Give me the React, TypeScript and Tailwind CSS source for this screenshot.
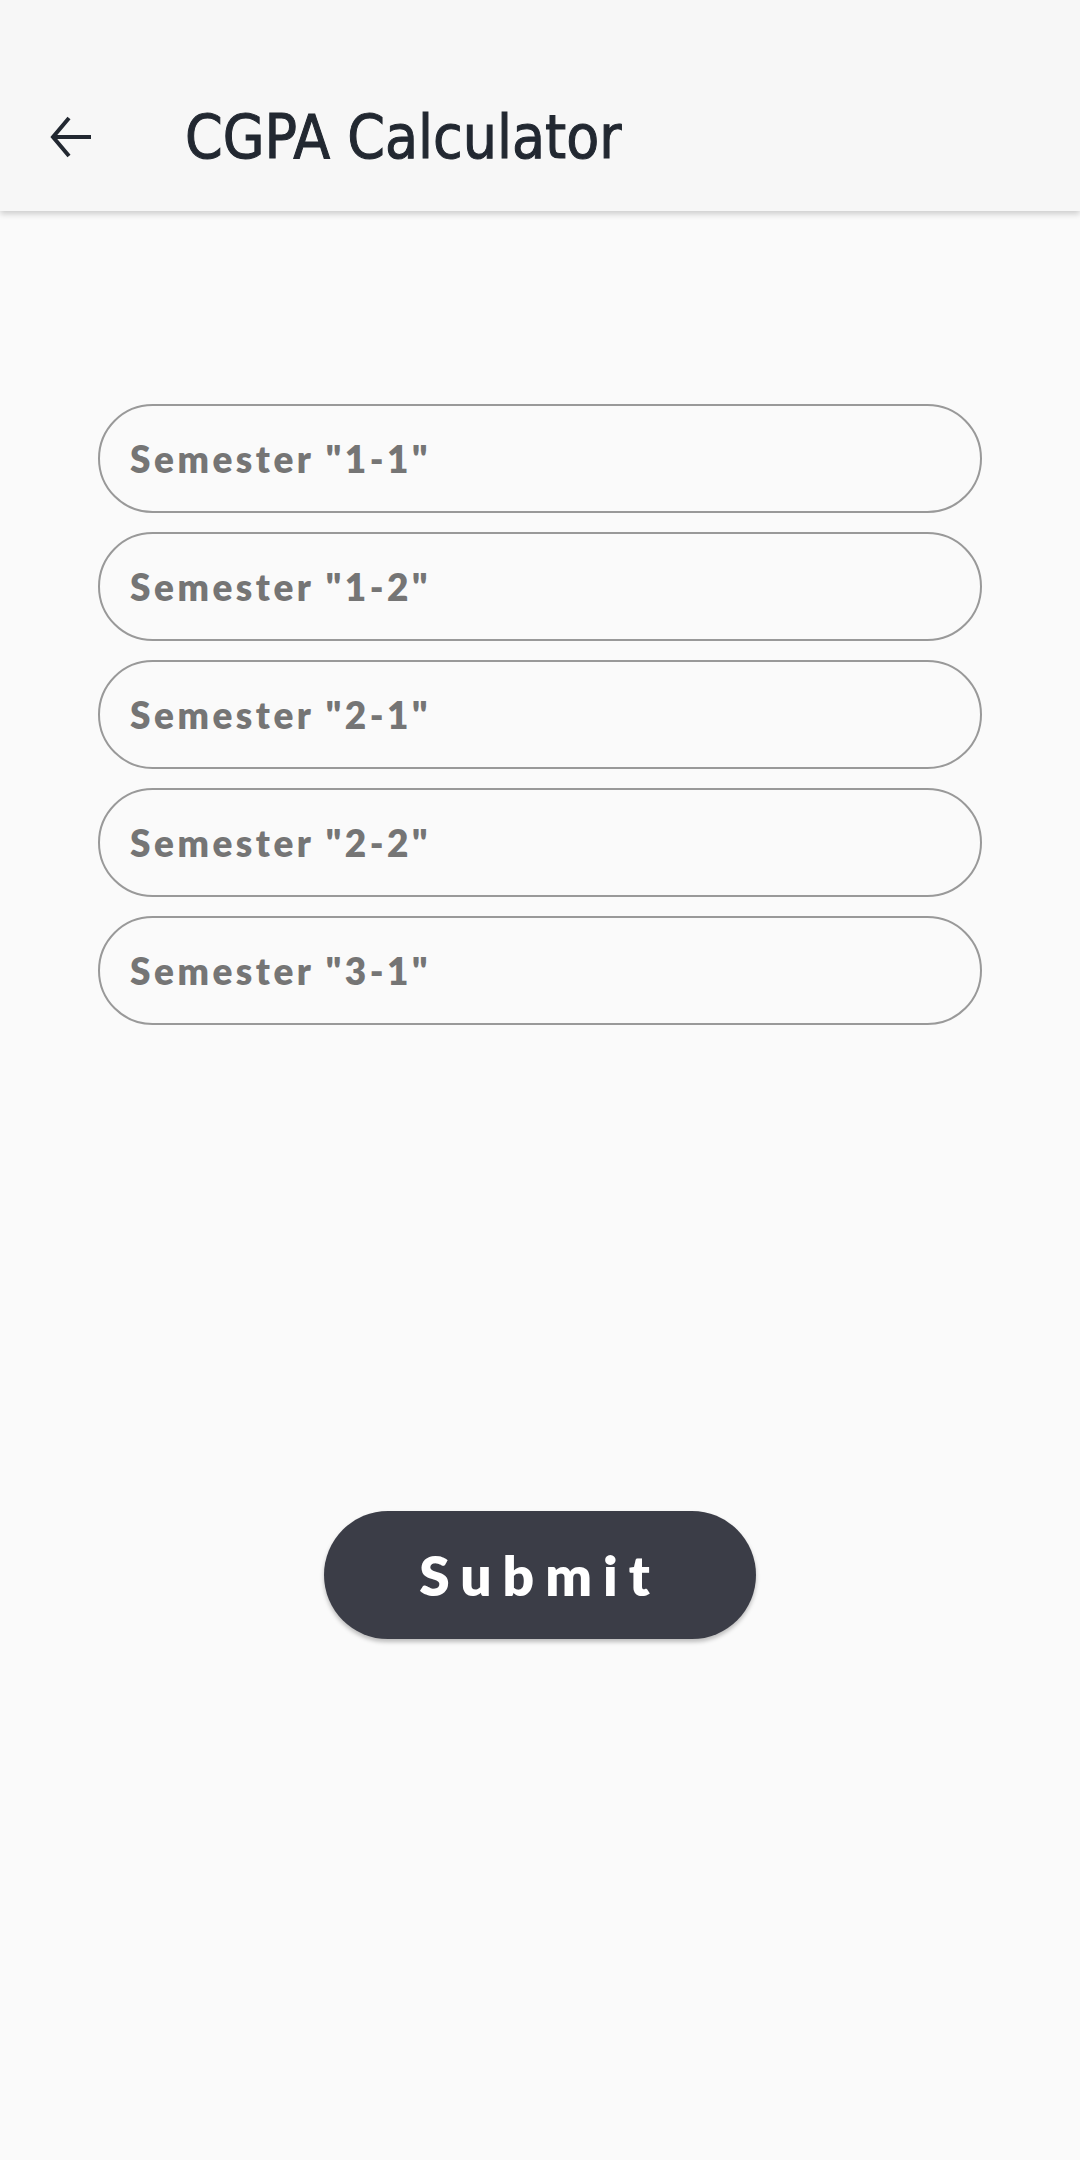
import { useState } from 'react'

const semesters = ['1-1', '1-2', '2-1', '2-2', '3-1']

function BackArrow() {
  return (
    <svg width="44" height="44" viewBox="0 0 44 44" fill="none" className="text-[#222831]">
      <path d="M20 3 L4 22 L20 41" stroke="currentColor" strokeWidth="4" strokeLinejoin="miter" />
      <path d="M4 22 H42" stroke="currentColor" strokeWidth="4" />
    </svg>
  )
}

export default function App() {
  const [values, setValues] = useState<Record<string, string>>({})

  return (
    <div className="min-h-[2160px] w-[1080px] bg-[#fafafa]">
      <header className="relative z-10 flex h-[211px] items-end bg-[#f7f7f7] shadow-[0_3px_6px_rgba(0,0,0,0.18)]">
        <div className="flex h-[148px] w-full items-center">
          <button className="ml-[49px] flex h-[44px] w-[44px] items-center justify-center">
            <BackArrow />
          </button>
          <h1 className="ml-[92px] font-['DejaVu_Sans_Condensed','Roboto_Condensed',Roboto,sans-serif] text-[60px] leading-none text-[#222831] [-webkit-text-stroke:1px_#222831]">
            CGPA Calculator
          </h1>
        </div>
      </header>

      <main className="flex flex-col items-center">
        <div className="mt-[193px] flex w-[884px] flex-col gap-[19px]">
          {semesters.map((s) => (
            <input
              key={s}
              value={values[s] ?? ''}
              onChange={(e) => setValues({ ...values, [s]: e.target.value })}
              placeholder={`Semester "${s}"`}
              className="h-[109px] w-full rounded-full border-[2.5px] border-[#999999] bg-transparent px-[30px] font-['Lato',sans-serif] text-[37px] font-extrabold tracking-[3.5px] text-[#616161] outline-none placeholder:text-[#757575]"
            />
          ))}
        </div>

        <button className="mt-[486px] flex h-[128px] w-[432px] items-center justify-center rounded-full bg-[#3b3d47] font-['Lato',sans-serif] text-[55px] font-extrabold tracking-[11px] text-white shadow-[0_3px_4px_rgba(0,0,0,0.25)]">
          Submit
        </button>
      </main>
    </div>
  )
}
